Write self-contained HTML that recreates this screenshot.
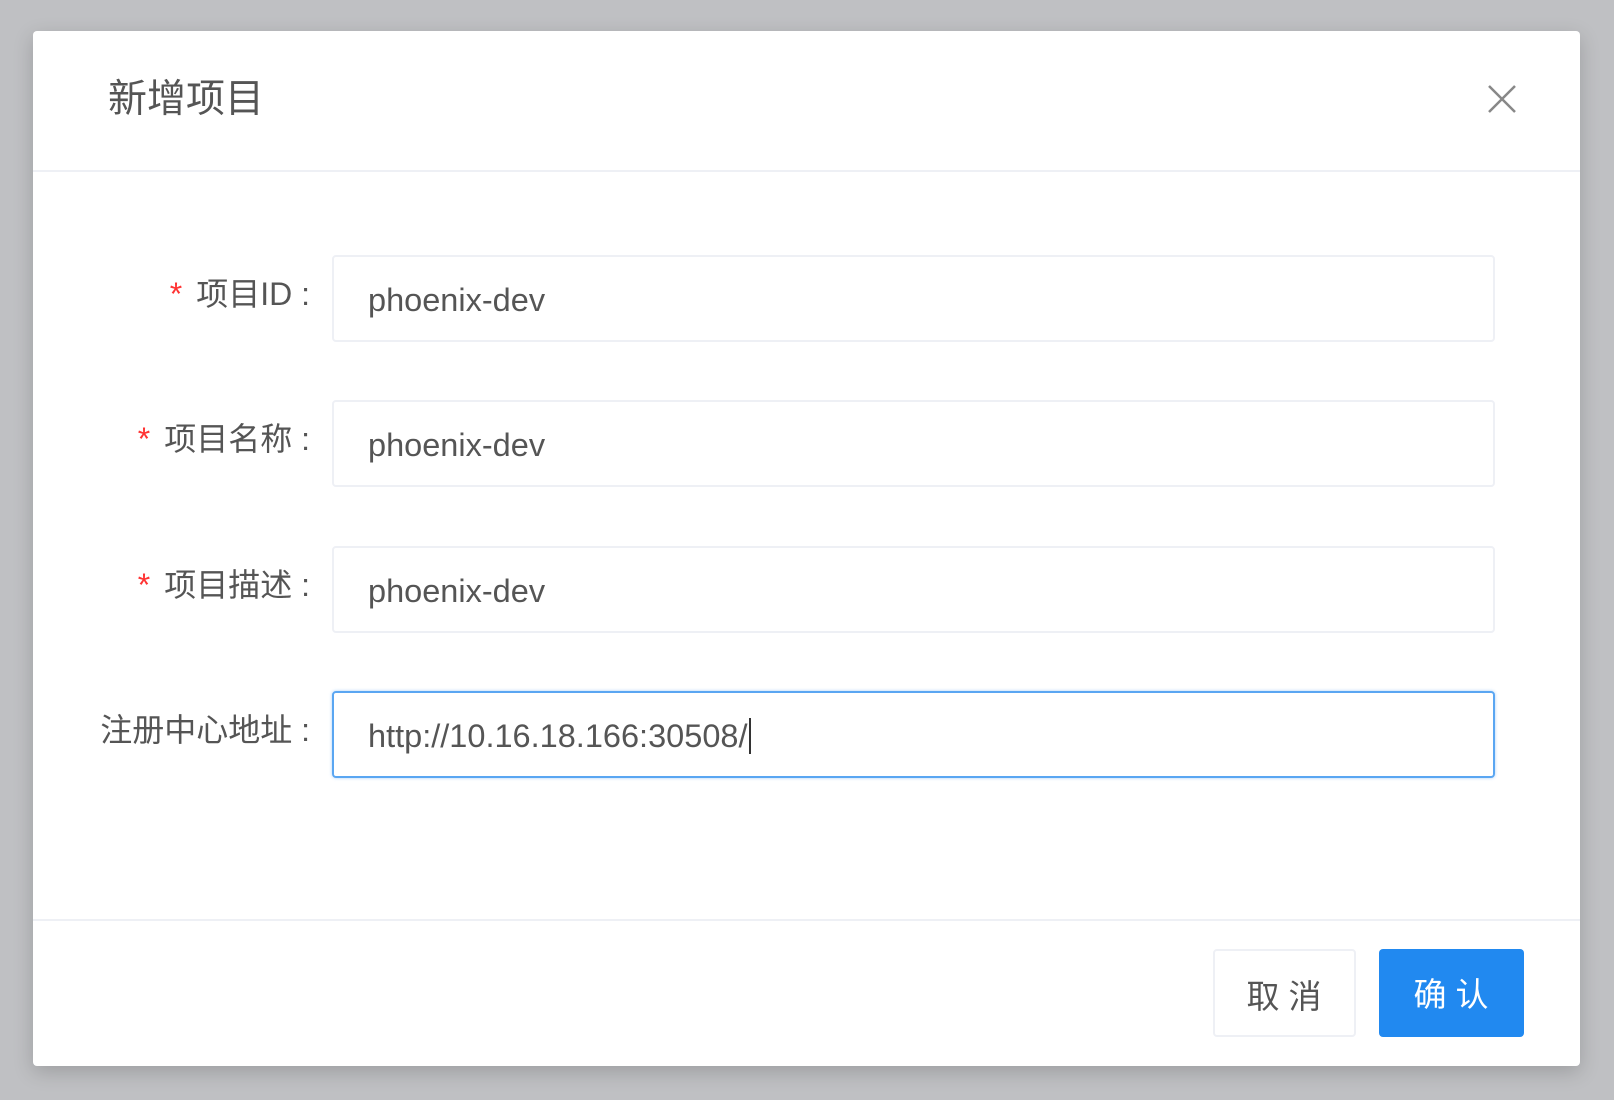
<!DOCTYPE html>
<html><head><meta charset="utf-8"><style>
*{margin:0;padding:0;box-sizing:border-box}
body{width:1614px;height:1100px;background:#bfc0c3;position:relative;overflow:hidden;font-family:"Liberation Sans","Noto Sans CJK SC",sans-serif}
.modal{position:absolute;left:33px;top:31px;width:1547px;height:1035px;background:#fff;border-radius:4px;box-shadow:0 6px 20px rgba(0,0,0,.18)}
.title{position:absolute;left:75px;top:44px;font-size:39px;color:#555;line-height:50px}
.close{position:absolute;left:1454px;top:53px;width:30px;height:30px}
.hd{position:absolute;left:0;right:0;top:139px;height:2px;background:#eef0f5}
.fd{position:absolute;left:0;right:0;top:888px;height:2px;background:#eef0f5}
.row{position:absolute;left:0;width:100%;height:87px}
.lbl{position:absolute;right:1270px;top:17px;font-size:32px;color:#555;white-space:nowrap;line-height:44px}
.lbl i{color:#f33;font-style:normal;margin-right:14px}
.inp{position:absolute;left:299px;width:1163px;height:87px;top:0;border:2px solid #eef0f5;border-radius:4px;font-size:32.5px;color:#555;padding-left:34px;line-height:87px}
.inp.f{border-color:#5aa6f2;box-shadow:0 0 3px rgba(45,140,240,.4)}
.btn{position:absolute;top:918px;height:88px;width:143px;border-radius:4px;font-size:33px;text-align:center;line-height:92px;letter-spacing:9px;padding-left:8px}
</style></head><body>
<div class="modal">
<div class="title">新增项目</div>
<svg class="close" viewBox="0 0 30 30"><path d="M2 2L28 28M28 2L2 28" stroke="#888" stroke-width="2.5" fill="none"/></svg>
<div class="hd"></div>
<div class="row" style="top:224px"><div class="lbl"><i>*</i>项目ID :</div><div class="inp">phoenix-dev</div></div>
<div class="row" style="top:369px"><div class="lbl"><i>*</i>项目名称 :</div><div class="inp">phoenix-dev</div></div>
<div class="row" style="top:515px"><div class="lbl"><i>*</i>项目描述 :</div><div class="inp">phoenix-dev</div></div>
<div class="row" style="top:660px"><div class="lbl">注册中心地址 :</div><div class="inp f">http://10.16.18.166:30508/<span style="border-left:2px solid #333;margin-left:1px"></span></div></div>
<div class="fd"></div>
<div class="btn" style="left:1180px;border:2px solid #eef0f5;color:#555">取消</div>
<div class="btn" style="left:1346px;background:#2189f0;color:#fff;width:145px">确认</div>
</div>
</body></html>
